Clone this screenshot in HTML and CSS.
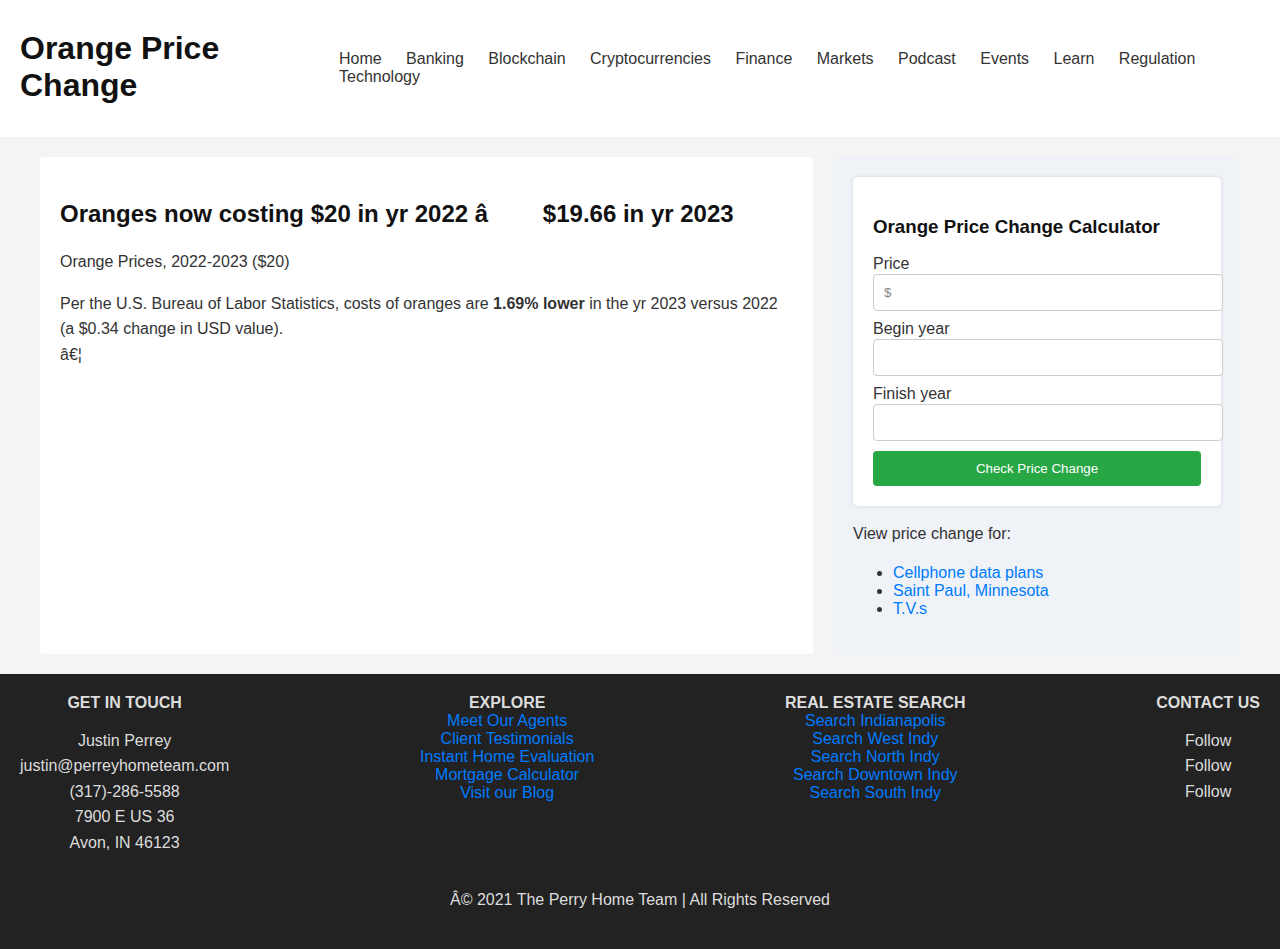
FILE: index.html
```html
<!DOCTYPE html>
<html lang="en">
<head>
<meta charset="utf-8">
<title>Orange Price Change</title>
<link rel="stylesheet" href="styles.css">
</head>
<body>
<header class="site-header">
  <h1 class="site-title">Orange Price Change</h1>
  <nav class="main-nav">
    <a href="#">Home</a>
    <a href="#">Banking</a>
    <a href="#">Blockchain</a>
    <a href="#">Cryptocurrencies</a>
    <a href="#">Finance</a>
    <a href="#">Markets</a>
    <a href="#">Podcast</a>
    <a href="#">Events</a>
    <a href="#">Learn</a>
    <a href="#">Regulation</a>
    <a href="#">Technology</a>
  </nav>
</header>

<main class="content">
  <article class="article-card">
    <h2 class="article-title">Oranges now costing $20 in yr 2022 â<span class="gap"></span> $19.66 in yr 2023</h2>
    <p>Orange Prices, 2022-2023 ($20)</p>
    <p>Per the U.S. Bureau of Labor Statistics, costs of oranges are <strong>1.69% lower</strong> in the yr 2023 versus 2022 (a $0.34 change in USD value).<br>â€¦</p>
  </article>

  <aside class="sidebar">
    <div class="calc-card">
      <h3 class="calc-title">Orange Price Change Calculator</h3>
      <form class="calc-form">
        <label class="calc-label" for="price">Price</label>
        <input class="calc-input" id="price" type="text" placeholder="$">
        <label class="calc-label" for="begin">Begin year</label>
        <input class="calc-input" id="begin" type="text">
        <label class="calc-label" for="finish">Finish year</label>
        <input class="calc-input" id="finish" type="text">
        <button class="calc-button" type="button">Check Price Change</button>
      </form>
    </div>
    <p class="view-for">View price change for:</p>
    <ul class="related">
      <li><a href="#">Cellphone data plans</a></li>
      <li><a href="#">Saint Paul, Minnesota</a></li>
      <li><a href="#">T.V.s</a></li>
    </ul>
  </aside>
</main>

<footer class="site-footer">
  <div class="footer-cols">
    <div class="footer-col">
      <h4 class="footer-heading">GET IN TOUCH</h4>
      <p class="footer-text">Justin Perrey<br>justin@perreyhometeam.com<br>(317)-286-5588<br>7900 E US 36<br>Avon, IN 46123</p>
    </div>
    <div class="footer-col">
      <h4 class="footer-heading">EXPLORE</h4>
      <a href="#">Meet Our Agents</a>
      <a href="#">Client Testimonials</a>
      <a href="#">Instant Home Evaluation</a>
      <a href="#">Mortgage Calculator</a>
      <a href="#">Visit our Blog</a>
    </div>
    <div class="footer-col">
      <h4 class="footer-heading">REAL ESTATE SEARCH</h4>
      <a href="#">Search Indianapolis</a>
      <a href="#">Search West Indy</a>
      <a href="#">Search North Indy</a>
      <a href="#">Search Downtown Indy</a>
      <a href="#">Search South Indy</a>
    </div>
    <div class="footer-col">
      <h4 class="footer-heading">CONTACT US</h4>
      <p class="footer-text">Follow<br>Follow<br>Follow</p>
    </div>
  </div>
  <p class="copyright">Â© 2021 The Perry Home Team | All Rights Reserved</p>
</footer>
</body>
</html>
```

FILE: styles.css
```css
* { box-sizing: content-box; }

body {
  margin: 0;
  font-family: "Liberation Sans", Arial, sans-serif;
  font-size: 16px;
  color: #333;
  background: #f4f4f4;
}

a { text-decoration: none; }

/* Header */
.site-header {
  display: flex;
  align-items: center;
  background: #fff;
  padding: 30px 20px 33px;
}

.site-title {
  flex: 0 0 319px;
  margin: 0;
  font-size: 32px;
  line-height: 37px;
  font-weight: bold;
  color: #111;
}

.main-nav {
  flex: 1;
  display: flex;
  flex-wrap: wrap;
  column-gap: 24.4px;
  row-gap: 0;
  line-height: 18px;
  padding-top: 2px;
}

.main-nav a {
  color: #333;
  font-size: 16px;
}

/* Main */
.content {
  display: grid;
  grid-template-columns: 1fr 406px;
  gap: 21px;
  padding: 20px 40px;
}

.article-card {
  background: #fff;
  border-radius: 4px;
  padding: 20px;
}

.article-title {
  margin: 22px 0 21px;
  font-size: 24px;
  line-height: 29px;
  color: #111;
}

.gap {
  display: inline-block;
  width: 48px;
}

.article-card p {
  margin: 16px 0;
  line-height: 1.6;
}

.sidebar {
  background: #eff2f7;
  border-radius: 6px;
  padding: 20px 19px 20px;
}

.calc-card {
  background: #fff;
  border-radius: 5px;
  box-shadow: 0 0 4px rgba(0, 0, 0, 0.12);
  padding: 20px;
}

.calc-title {
  margin: 19px 0 16px;
  font-size: 18.72px;
  line-height: 21.5px;
  color: #111;
}

.calc-form {
  display: block;
}

.calc-label {
  display: block;
  line-height: 20px;
  color: #333;
}

.calc-input {
  display: block;
  width: 100%;
  margin: 0 0 8px;
  padding: 10px;
  border: 1px solid #ccc;
  border-radius: 4px;
  font-family: "Liberation Sans", Arial, sans-serif;
  font-size: 13.33px;
  line-height: 15px;
  height: 15px;
  background: #fff;
}

.calc-input::placeholder {
  color: #888;
}

.calc-button {
  display: block;
  box-sizing: border-box;
  width: 100%;
  height: 35px;
  margin-top: 10px;
  border: none;
  border-radius: 4px;
  background: #28a745;
  color: #fff;
  font-family: "Liberation Sans", Arial, sans-serif;
  font-size: 13.33px;
  cursor: pointer;
}

.view-for {
  margin: 16px 0;
  line-height: 24px;
}

.related {
  margin: 18px 0 16px;
  padding-left: 40px;
  line-height: 18px;
}

.related a {
  color: #007bff;
}

/* Footer */
.site-footer {
  background: #222;
  color: #ddd;
  padding: 20px 20px 20px;
}

.footer-cols {
  display: flex;
  justify-content: space-between;
}

.footer-col {
  display: flex;
  flex-direction: column;
  align-items: center;
  text-align: center;
  line-height: 18px;
}

.footer-col a {
  color: #007bff;
}

.footer-heading {
  margin: 0;
  font-size: 16px;
  line-height: 18px;
  color: #ddd;
}

.footer-text {
  margin: 16px 0;
  line-height: 1.6;
  color: #ddd;
}

.copyright {
  margin: 20px 0 20px;
  text-align: center;
  line-height: 18px;
  color: #ddd;
}
```
